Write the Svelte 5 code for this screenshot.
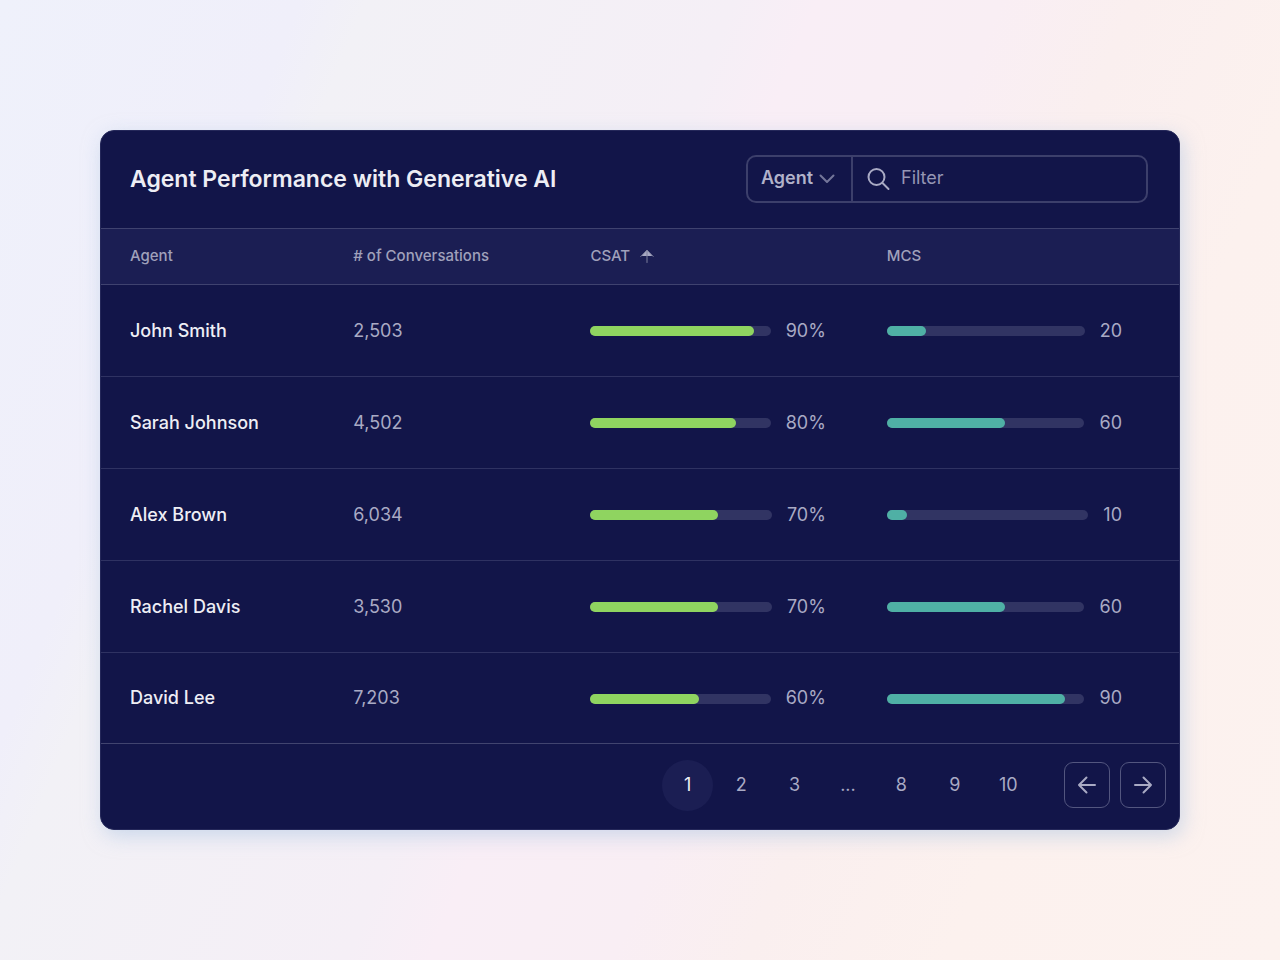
<script>
  const agents = [
    { name: 'John Smith', conversations: 2503, csat: 90, csatFill: 90.5, mcs: 20 },
    { name: 'Sarah Johnson', conversations: 4502, csat: 80, csatFill: 80.5, mcs: 60 },
    { name: 'Alex Brown', conversations: 6034, csat: 70, csatFill: 70.5, mcs: 10 },
    { name: 'Rachel Davis', conversations: 3530, csat: 70, csatFill: 70.5, mcs: 60 },
    { name: 'David Lee', conversations: 7203, csat: 60, csatFill: 60.5, mcs: 90 }
  ];

  const pages = ['1', '2', '3', '...', '8', '9', '10'];

  let current = $state('1');
  let filter = $state('');

  let rows = $derived(
    agents.filter((a) => a.name.toLowerCase().includes(filter.toLowerCase()))
  );
</script>

<main class="page">
  <section class="card">
    <header class="card-header">
      <h1>Agent Performance with Generative AI</h1>
      <div class="filter">
        <div class="filter-field">
          <select aria-label="Filter by">
            <option>Agent</option>
            <option>CSAT</option>
            <option>MCS</option>
          </select>
          <svg class="chevron" viewBox="0 0 16 10" aria-hidden="true">
            <path d="M1.5 1.5 8 8l6.500-6.500" />
          </svg>
        </div>
        <label class="filter-search">
          <svg class="search" viewBox="0 0 24 24" aria-hidden="true">
            <circle cx="9.500" cy="10" r="8" />
            <path d="m15.500 16 6 6" />
          </svg>
          <input type="text" placeholder="Filter" aria-label="Filter" bind:value={filter} />
        </label>
      </div>
    </header>

    <table>
      <thead>
        <tr>
          <th class="col-agent">Agent</th>
          <th class="col-count"># of Conversations</th>
          <th class="col-csat">
            <span class="sort">
              CSAT
              <svg viewBox="0 0 14 14" aria-hidden="true">
                <path class="head" d="M7 1 12.500 7H1.500z" />
                <path class="stem" d="M7 2v11.500M.8 7.500 7 1l6.200 6.500" />
              </svg>
            </span>
          </th>
          <th class="col-mcs">MCS</th>
        </tr>
      </thead>
      <tbody>
        {#each rows as agent}
          <tr>
            <td class="name">{agent.name}</td>
            <td>{agent.conversations.toLocaleString('en-US')}</td>
            <td>
              <div class="meter">
                <div class="track"><div class="fill green" style="width: {agent.csatFill}%"></div></div>
                <span>{agent.csat}%</span>
              </div>
            </td>
            <td>
              <div class="meter">
                <div class="track"><div class="fill teal" style="width: {agent.mcs}%"></div></div>
                <span>{agent.mcs}</span>
              </div>
            </td>
          </tr>
        {/each}
      </tbody>
    </table>

    <nav class="pagination" aria-label="Pagination">
      <ul>
        {#each pages as page}
          <li>
            {#if page === '...'}
              <span class="page-item">{page}</span>
            {:else}
              <button class="page-item" class:active={page === current} onclick={() => (current = page)}>{page}</button>
            {/if}
          </li>
        {/each}
      </ul>
      <div class="arrows">
        <button class="arrow" aria-label="Previous page">
          <svg viewBox="0 0 20 20"><path d="M18 10H2M9.500 2.500 2 10l7.500 7.500" /></svg>
        </button>
        <button class="arrow" aria-label="Next page">
          <svg viewBox="0 0 20 20"><path d="M2 10h16M10.500 2.500 18 10l-7.500 7.500" /></svg>
        </button>
      </div>
    </nav>
  </section>
</main>

<style>
  :global(body) {
    font-family: Inter, "Liberation Sans", sans-serif;
    color: #a9aac4;
  }

  .page {
    box-sizing: border-box;
    min-height: 100vh;
    padding: 100px;
    display: flex;
    align-items: center;
    background: linear-gradient(112deg, #eff1fb 0%, #f0effa 18%, #f2f1f6 22%, #f5eff6 44%, #f9eef6 49%, #f9eef4 60%, #faefef 68%, #fcf1ee 80%, #fcf2ef 100%);
  }

  .card {
    flex: 1;
    box-sizing: border-box;
    overflow: hidden;
    border: 1px solid #25285a;
    border-radius: 14px;
    background: #121549;
    box-shadow: 3px 6px 20px rgba(170, 195, 225, 0.55);
  }

  .card-header {
    display: flex;
    box-sizing: border-box;
    align-items: center;
    justify-content: space-between;
    height: 97px;
    padding: 0 31px 2px 29px;
  }

  h1 {
    margin: 0;
    font-size: 23px;
    font-weight: 600;
    color: #ededf4;
  }

  .filter {
    display: flex;
    box-sizing: border-box;
    width: 402px;
    height: 48px;
    border: 2px solid #3c3f6b;
    border-radius: 10px;
  }

  .filter-field {
    position: relative;
    border-right: 2px solid #3c3f6b;
  }

  select {
    appearance: none;
    width: 103px;
    height: 100%;
    padding: 0 32px 2px 13px;
    border: 0;
    background: transparent;
    color: #b1b2ca;
    font: 600 18px Inter, "Liberation Sans", sans-serif;
  }

  .chevron {
    position: absolute;
    top: 17px;
    right: 16px;
    width: 16px;
    height: 10px;
    pointer-events: none;
  }

  svg {
    fill: none;
    stroke: #a9aac4;
    stroke-width: 2;
    stroke-linecap: round;
    stroke-linejoin: round;
  }

  .chevron {
    stroke: #74769a;
  }

  .filter-search {
    flex: 1;
    display: flex;
    align-items: center;
    gap: 10px;
    padding: 0 14px;
  }

  .search {
    width: 24px;
    height: 24px;
    flex: none;
  }

  input {
    flex: 1;
    min-width: 0;
    padding: 0 0 2px;
    border: 0;
    outline: 0;
    background: transparent;
    color: #a9aac4;
    font: 400 18px Inter, "Liberation Sans", sans-serif;
  }

  input::placeholder {
    color: #9596b4;
    opacity: 1;
  }

  table {
    width: 100%;
    table-layout: fixed;
    border-collapse: separate;
    border-spacing: 0;
  }

  th {
    box-sizing: border-box;
    height: 57px;
    padding: 0 0 2px;
    border-top: 1px solid #3f426f;
    border-bottom: 1px solid #3f426f;
    background: #1b1e53;
    text-align: left;
    font-size: 15px;
    font-weight: 500;
    color: #a0a1bb;
  }

  .col-agent {
    width: 23.4%;
  }

  .col-count {
    width: 22%;
  }

  .col-csat {
    width: 27.5%;
  }

  .sort {
    display: flex;
    align-items: center;
    gap: 10px;
  }

  .sort svg {
    width: 14px;
    height: 14px;
    stroke-width: 1;
    stroke: #7c7e9c;
  }

  .sort .head {
    fill: #a9aac4;
    stroke: none;
  }

  td {
    box-sizing: border-box;
    height: 92px;
    padding: 0 61px 1px 0;
    border-bottom: 1px solid #2f3262;
    font-size: 18px;
  }

  th:first-child,
  td:first-child {
    padding-left: 29px;
  }

  td:first-child {
    padding-right: 0;
  }

  td:last-child {
    padding-right: 57px;
  }

  tbody tr:last-child td {
    height: 91px;
    border-bottom-color: #41446f;
  }

  .name {
    font-weight: 500;
    color: #eeeef5;
  }

  .meter {
    display: flex;
    align-items: center;
    gap: 15px;
  }

  .track {
    flex: 1;
    height: 10px;
    margin-top: 2px;
    border-radius: 5px;
    background: #313463;
  }

  .fill {
    height: 100%;
    border-radius: 5px;
  }

  .green {
    background: #8fd460;
  }

  .teal {
    background: #4fb0a5;
  }

  .pagination {
    display: flex;
    box-sizing: border-box;
    align-items: center;
    justify-content: flex-end;
    gap: 29px;
    height: 85px;
    padding: 0 13px 3px 0;
  }

  ul {
    display: flex;
    width: 374px;
    margin: 0;
    padding: 0;
    list-style: none;
  }

  li {
    flex: 1;
    display: flex;
    justify-content: center;
  }

  .page-item {
    display: flex;
    align-items: center;
    justify-content: center;
    width: 51px;
    height: 51px;
    padding: 0 0 2px;
    box-sizing: border-box;
    border: 0;
    border-radius: 50%;
    background: transparent;
    color: #a9aac4;
    font: 400 18px Inter, "Liberation Sans", sans-serif;
  }

  .page-item.active {
    background: #1b1e53;
    color: #eeeef5;
  }

  .arrows {
    display: flex;
    gap: 10px;
  }

  .arrow {
    display: flex;
    align-items: center;
    justify-content: center;
    box-sizing: border-box;
    width: 46px;
    height: 46px;
    padding: 0;
    border: 1px solid #53567f;
    border-radius: 9px;
    background: transparent;
  }

  .arrow svg {
    width: 20px;
    height: 20px;
  }
</style>
